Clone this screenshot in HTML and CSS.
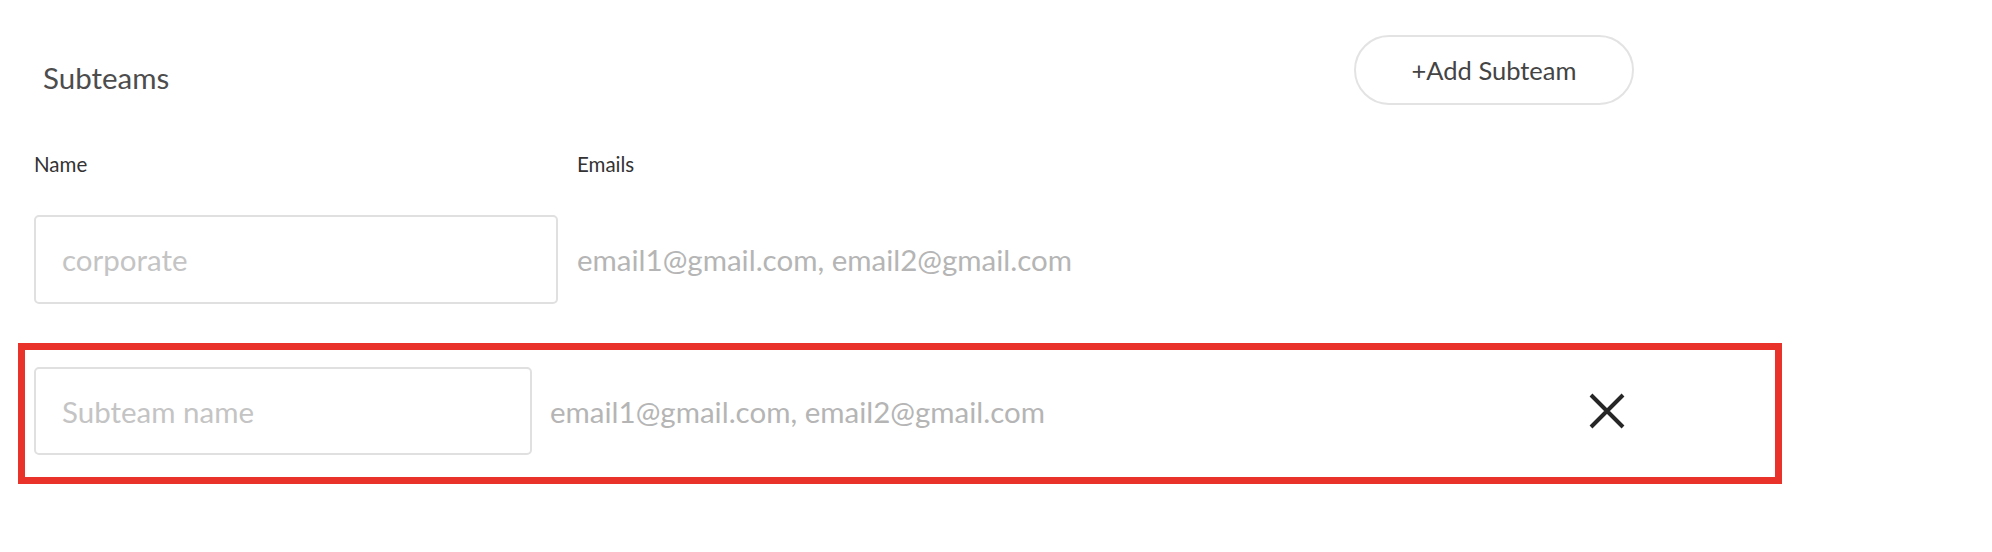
FILE: index.html
```html
<!DOCTYPE html>
<html lang="en">
<head>
<meta charset="utf-8">
<title>Subteams</title>
<link rel="stylesheet" href="styles.css">
</head>
<body>
<main class="page">
  <header class="header">
    <h2 class="title">Subteams</h2>
    <button class="add-btn" type="button">+Add Subteam</button>
  </header>
  <div class="labels">
    <span class="label">Name</span>
    <span class="label">Emails</span>
  </div>
  <div class="row row-first">
    <input class="name-input" type="text" placeholder="corporate">
    <span class="emails">email1@gmail.com, email2@gmail.com</span>
  </div>
  <div class="highlight">
    <div class="row row-new">
      <input class="name-input" type="text" placeholder="Subteam name">
      <span class="emails">email1@gmail.com, email2@gmail.com</span>
      <button class="remove" type="button" aria-label="Remove">
        <svg viewBox="0 0 38 36" width="38" height="36"><path d="M3 2 L35 34 M35 2 L3 34" stroke="#262626" stroke-width="4" stroke-linecap="butt" fill="none"/></svg>
      </button>
    </div>
  </div>
</main>
</body>
</html>
```
FILE: styles.css
```css
* { box-sizing: border-box; }
html, body { margin: 0; padding: 0; background: #ffffff; }
body { font-family: Lato, "Open Sans", "Liberation Sans", sans-serif; color: #333; }
.page { width: 1992px; height: 552px; }
.header {
  width: 1634px;
  padding: 35px 0 0 43px;
  display: flex;
  justify-content: space-between;
  align-items: center;
}
.title {
  margin: 0;
  padding-top: 14px;
  font-size: 29.5px;
  font-weight: 400;
  color: #4d4d4d;
}
.add-btn {
  width: 280px;
  height: 70px;
  border: 2px solid #e3e3e3;
  border-radius: 35px;
  background: #fff;
  font-family: inherit;
  font-size: 25.5px;
  color: #444;
  padding: 0;
}
.labels {
  display: grid;
  grid-template-columns: 524px 1fr;
  column-gap: 19px;
  padding: 44px 0 0 34px;
}
.label { font-size: 20.5px; color: #333; line-height: 30px; }
.row {
  display: grid;
  align-items: center;
}
.row-first {
  grid-template-columns: 524px 1fr;
  column-gap: 19px;
  padding: 36px 0 0 34px;
}
.name-input {
  height: 89px;
  width: 100%;
  border: 2px solid #e0e0e0;
  border-radius: 5px;
  padding: 0 0 0 26px;
  font-family: inherit;
  font-size: 29.5px;
  color: #333;
  background: #fff;
  outline: none;
}
.name-input::placeholder { color: #c4c4c4; }
.emails { font-size: 29.5px; color: #b5b5b5; }
.highlight {
  margin: 39px 0 0 18px;
  width: 1764px;
  border: 7px solid #e8322a;
  padding: 17px 0 22px 9px;
}
.row-new {
  grid-template-columns: 498px 1fr 38px;
  column-gap: 18px;
  padding-right: 149px;
}
.row-new .name-input { height: 88px; }
.remove {
  border: 0;
  background: none;
  padding: 0;
  width: 38px;
  height: 36px;
  display: block;
}
.remove svg { display: block; }
```
